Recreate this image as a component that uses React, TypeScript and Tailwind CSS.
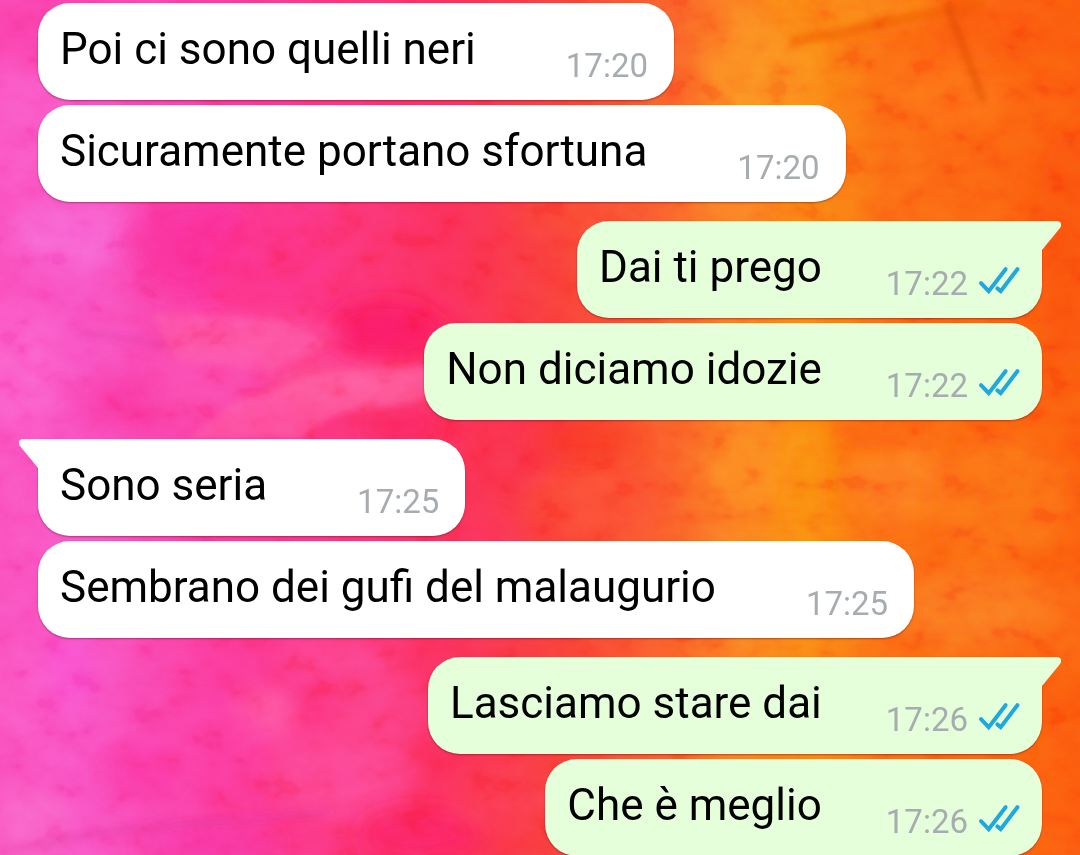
import clsx from "clsx";

type Message = {
  id: number;
  text: string;
  time: string;
  mine?: boolean;
  tail?: boolean;
};

const messages: Message[] = [
  { id: 1, text: "Poi ci sono quelli neri", time: "17:20" },
  { id: 2, text: "Sicuramente portano sfortuna", time: "17:20" },
  { id: 3, text: "Dai ti prego", time: "17:22", mine: true, tail: true },
  { id: 4, text: "Non diciamo idozie", time: "17:22", mine: true },
  { id: 5, text: "Sono seria", time: "17:25", tail: true },
  { id: 6, text: "Sembrano dei gufi del malaugurio", time: "17:25" },
  { id: 7, text: "Lasciamo stare dai", time: "17:26", mine: true, tail: true },
  { id: 8, text: "Che è meglio", time: "17:26", mine: true },
];

// soft paint strokes: [cx, cy, rx, ry, color, opacity]
const strokes: [number, number, number, number, string, number][] = [
  [60, 30, 90, 50, "#fb3da6", 0.8],
  [20, 120, 50, 60, "#fb58c6", 0.7],
  [70, 235, 60, 35, "#f866d4", 0.8],
  [190, 245, 60, 50, "#fb2a96", 0.7],
  [270, 270, 60, 50, "#fd2f7e", 0.5],
  [385, 330, 60, 30, "#fb1860", 0.8],
  [400, 424, 40, 16, "#fb205c", 0.8],
  [250, 340, 90, 22, "#fc4f9e", 0.9],
  [20, 370, 40, 60, "#fc60cb", 0.8],
  [125, 405, 50, 30, "#fa339b", 0.6],
  [210, 385, 60, 35, "#fb4fb4", 0.7],
  [350, 385, 80, 18, "#fd5797", 0.9],
  [20, 510, 30, 70, "#fb52bf", 0.5],
  [520, 430, 50, 60, "#fb2f50", 0.5],
  [600, 500, 70, 40, "#fd5034", 0.6],
  [585, 440, 50, 18, "#f9321f", 0.7],
  [480, 550, 40, 30, "#fc3060", 0.5],
  [25, 700, 40, 50, "#fb58c4", 0.7],
  [70, 670, 25, 40, "#f950d2", 0.7],
  [140, 770, 40, 30, "#fc36a0", 0.7],
  [265, 715, 30, 26, "#ff6bac", 0.6],
  [340, 660, 60, 20, "#fc4b98", 0.7],
  [380, 710, 50, 40, "#fb4690", 0.6],
  [210, 740, 60, 40, "#fc40a8", 0.5],
  [340, 775, 70, 45, "#fd4b98", 0.7],
  [30, 825, 40, 35, "#f96cc9", 0.6],
  [420, 835, 60, 24, "#fc2465", 0.8],
  [210, 845, 70, 16, "#f634a8", 0.7],
  [760, 80, 55, 60, "#fc9324", 0.6],
  [860, 8, 80, 18, "#fb8418", 0.9],
  [950, 90, 60, 40, "#fe7018", 0.6],
  [1000, 30, 80, 30, "#fb5310", 0.5],
  [600, 215, 90, 16, "#fb5434", 0.5],
  [720, 212, 50, 12, "#fb7c25", 0.6],
  [750, 470, 40, 40, "#fd8c22", 0.7],
  [805, 490, 22, 70, "#fb8e0d", 0.8],
  [900, 480, 50, 40, "#fd7c22", 0.8],
  [870, 432, 40, 16, "#fd5c0c", 0.7],
  [1000, 500, 70, 60, "#fc7218", 0.8],
  [980, 610, 80, 40, "#fb7920", 0.8],
  [1065, 250, 30, 120, "#fa500c", 0.7],
  [1065, 620, 30, 50, "#fb6b14", 0.6],
  [1065, 790, 30, 70, "#fd5a0c", 0.7],
  [500, 800, 50, 30, "#fd4058", 0.5],
];

function Wallpaper() {
  return (
    <svg className="absolute inset-0 h-full w-full" viewBox="0 0 1080 855" preserveAspectRatio="none" aria-hidden="true">
      <defs>
        <linearGradient id="paint" x1="0" x2="1" y1="0" y2="0">
          <stop offset="0" stopColor="#fa4fbd" />
          <stop offset="0.08" stopColor="#f852c2" />
          <stop offset="0.2" stopColor="#fb3a9a" />
          <stop offset="0.3" stopColor="#fc347c" />
          <stop offset="0.42" stopColor="#fb2f58" />
          <stop offset="0.52" stopColor="#f93f38" />
          <stop offset="0.61" stopColor="#fa5b2a" />
          <stop offset="0.68" stopColor="#fb7b22" />
          <stop offset="0.75" stopColor="#fa8413" />
          <stop offset="0.82" stopColor="#fb6a14" />
          <stop offset="1" stopColor="#fb5b0e" />
        </linearGradient>
        <filter id="soft" x="-50%" y="-50%" width="200%" height="200%">
          <feGaussianBlur stdDeviation="12" />
        </filter>
        <filter id="edge" x="-20%" y="-20%" width="140%" height="140%">
          <feGaussianBlur stdDeviation="3" />
        </filter>
        <filter id="grain" x="0" y="0" width="100%" height="100%">
          <feTurbulence type="fractalNoise" baseFrequency="0.03 0.04" numOctaves="3" seed="7" />
          <feColorMatrix values="2 0 0 0 -0.5  2 0 0 0 -0.5  2 0 0 0 -0.5  0 0 0 0 1" />
        </filter>
      </defs>
      <rect width="1080" height="855" fill="url(#paint)" />
      {strokes.map(([cx, cy, rx, ry, color, opacity], i) => (
        <ellipse key={i} cx={cx} cy={cy} rx={rx} ry={ry} fill={color} opacity={opacity} filter="url(#soft)" />
      ))}
      <g filter="url(#edge)">
        <path d="M150 311 L285 321 L330 345 L270 372 L180 360 Z" fill="#ff62ac" opacity="0.4" />
        <path d="M240 398 L330 372 L450 364 L450 396 L340 412 L300 438 L190 438 Z" fill="#ff66a8" opacity="0.45" />
        <path d="M80 332 L165 345" fill="none" stroke="#e0309c" strokeWidth="6" opacity="0.4" />
        <path d="M0 852 L120 830 L330 812" fill="none" stroke="#e0309c" strokeWidth="6" opacity="0.35" />
        <path d="M790 42 L845 32 L915 16 L985 3" fill="none" stroke="#ee5608" strokeWidth="9" opacity="0.6" />
        <path d="M947 6 L972 70 L984 102" fill="none" stroke="#d84400" strokeWidth="6" opacity="0.6" />
      </g>
      <rect width="1080" height="855" filter="url(#grain)" opacity="0.12" className="mix-blend-overlay" />
    </svg>
  );
}

function Tail({ mine }: { mine?: boolean }) {
  return (
    <svg
      className={clsx("absolute top-0 h-[30px] w-5", mine ? "left-full -ml-px text-[#e5ffdb]" : "right-full -mr-px -scale-x-100 text-white")}
      viewBox="0 0 20 30"
      fill="currentColor"
      aria-hidden="true"
    >
      <path d="M0 0H16C20 0 21.4 4 19 7L1 29V30H0Z" />
    </svg>
  );
}

function ReadTicks() {
  return (
    <svg
      className="mb-2 ml-[10px] h-[30px] w-[42px] shrink-0"
      viewBox="0 0 42 30"
      fill="none"
      stroke="#1fa8e0"
      strokeWidth="4"
      strokeLinecap="round"
      role="img"
      aria-label="Letto"
    >
      <path d="M3 17.2L10.7 25.2L27.6 3.2" />
      <path d="M19.4 22.4L22.7 25.2L39.4 3.2" />
    </svg>
  );
}

function Bubble({ message }: { message: Message }) {
  const { text, time, mine, tail } = message;
  return (
    <li
      className={clsx(
        "relative flex w-fit items-end rounded-[32px] pt-5 pb-[14px] pl-[22px] shadow-[0_1px_2px_rgba(60,0,20,0.4)]",
        mine ? "self-end bg-[#e5ffdb] pr-[22px]" : "self-start bg-white pr-[26px]",
        tail && (mine ? "rounded-tr-none" : "rounded-tl-none"),
        tail ? "mt-[19px]" : "mt-[5px] first:mt-0"
      )}
    >
      {tail && <Tail mine={mine} />}
      <p className="mb-[11px] text-[44px] leading-[52px] text-black">{text}</p>
      <time className={clsx("text-[33px] leading-10 text-[#a6acaf]", mine ? "ml-16" : "ml-[90px]")}>{time}</time>
      {mine && <ReadTicks />}
    </li>
  );
}

export default function App() {
  return (
    <main className="relative h-screen overflow-hidden bg-[#fb3f6c] font-[Roboto,sans-serif]">
      <Wallpaper />
      <ul className="relative flex flex-col px-[38px] pt-[3px]">
        {messages.map((message) => (
          <Bubble key={message.id} message={message} />
        ))}
      </ul>
    </main>
  );
}
